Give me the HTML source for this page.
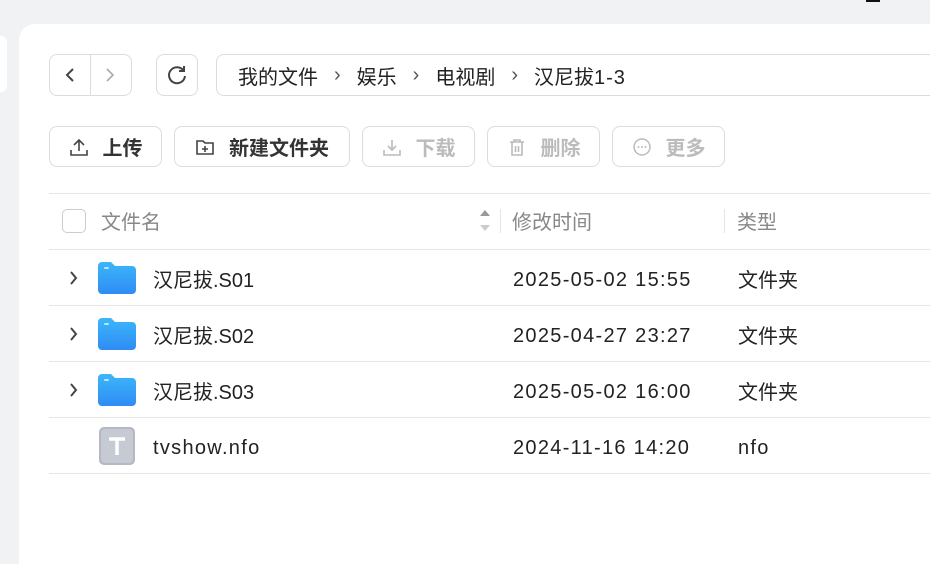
<!DOCTYPE html>
<html><head><meta charset="utf-8"><style>
*{margin:0;padding:0;box-sizing:border-box}
body{width:930px;height:549px;background:#f1f2f4;position:relative;overflow:hidden;font-family:"Liberation Sans","Noto Sans CJK SC",sans-serif;color:#222}
.abs{position:absolute}
.card{left:19px;top:24px;width:930px;height:540px;background:#fff;border-top-left-radius:16px}
.side{left:-10px;top:36px;width:17px;height:56px;background:#fff;border-radius:6px}
.box{border:1px solid #dcdcdc;border-radius:8px;background:#fff}
.btn{top:126px;height:41px;display:flex;align-items:center;justify-content:center;gap:14px;font-size:20px;font-weight:bold;color:#333}
.btn.dis{color:#bbb}
.line{left:49px;width:900px;height:1px;background:#e5e5e5}
.row{left:49px;width:900px;height:56px;font-size:20px;color:#222}
.row span{position:absolute;top:20px;line-height:24px;white-space:nowrap}
.row span.l{top:19px;letter-spacing:1.3px}
.fold{position:absolute;left:49px;top:13px;width:38px;height:32px}
.bc{display:flex;align-items:center;padding-left:21px;gap:16px;font-size:20px}
</style></head><body>
<div class="abs side"></div>
<div class="abs card"></div>
<div class="abs box" style="left:49px;top:54px;width:83px;height:42px"></div>
<div class="abs" style="left:90px;top:55px;width:1px;height:40px;background:#dcdcdc"></div>
<svg class="abs" style="left:62px;top:66px" width="16" height="18"><path d="M11 3L5 9l6 6" fill="none" stroke="#444" stroke-width="2"/></svg>
<svg class="abs" style="left:102px;top:66px" width="16" height="18"><path d="M5 3l6 6-6 6" fill="none" stroke="#aaa" stroke-width="1.6"/></svg>
<div class="abs box" style="left:156px;top:54px;width:42px;height:42px"></div>
<svg class="abs" style="left:165px;top:63px" width="24" height="24"><path d="M18.5 7.5A8 8 0 1 0 20 13" fill="none" stroke="#444" stroke-width="2"/><path d="M19 3v5h-5" fill="none" stroke="#444" stroke-width="2"/></svg>
<div class="abs box bc" style="left:216px;top:54px;width:730px;height:42px;color:#222">
<span>我的文件</span><span style="color:#555">›</span><span>娱乐</span><span style="color:#555">›</span><span>电视剧</span><span style="color:#555">›</span><span>汉尼拔<span style="letter-spacing:1px">1-3</span></span></div>

<div class="abs box btn" style="left:49px;width:113px"><svg width="20" height="20"><path d="M10 14V3M5 8l5-5 5 5M2 13v5h16v-5" fill="none" stroke="#444" stroke-width="1.6"/></svg>上传</div>
<div class="abs box btn" style="left:174px;width:176px"><svg width="20" height="20"><path d="M2 4h6l2 2h8v11H2z M10 9v6M7 12h6" fill="none" stroke="#444" stroke-width="1.6"/></svg>新建文件夹</div>
<div class="abs box btn dis" style="left:362px;width:113px"><svg width="20" height="20"><path d="M10 3v10M6 9l4 4 4-4M2 13v5h16v-5" fill="none" stroke="#bbb" stroke-width="1.6"/></svg>下载</div>
<div class="abs box btn dis" style="left:487px;width:113px"><svg width="20" height="20"><path d="M3 5h14M7 5V3h6v2M5 5v13h10V5M8.5 9v6M11.5 9v6" fill="none" stroke="#bbb" stroke-width="1.6"/></svg>删除</div>
<div class="abs box btn dis" style="left:612px;width:113px"><svg width="20" height="20"><circle cx="10" cy="10" r="8" fill="none" stroke="#bbb" stroke-width="1.5"/><circle cx="6.5" cy="10" r="1" fill="#bbb"/><circle cx="10" cy="10" r="1" fill="#bbb"/><circle cx="13.5" cy="10" r="1" fill="#bbb"/></svg>更多</div>

<div class="abs line" style="top:193px"></div>
<div class="abs" style="left:62px;top:209px;width:24px;height:24px;border:1.5px solid #ccc;border-radius:5px"></div>
<div class="abs" style="left:101px;top:206px;font-size:20px;color:#888">文件名</div>
<svg class="abs" style="left:479px;top:208px" width="12" height="26"><path d="M1 8l5-6 5 6z" fill="#999"/><path d="M1 17l5 6 5-6z" fill="#ccc"/></svg>
<div class="abs" style="left:500px;top:209px;width:1px;height:24px;background:#e5e5e5"></div>
<div class="abs" style="left:512px;top:206px;font-size:20px;color:#888">修改时间</div>
<div class="abs" style="left:724px;top:209px;width:1px;height:24px;background:#e5e5e5"></div>
<div class="abs" style="left:737px;top:206px;font-size:20px;color:#888">类型</div>
<div class="abs line" style="top:249px"></div>

<div class="abs row" style="top:249px"><svg class="abs" style="left:19px;top:21px" width="12" height="16"><path d="M3 2l5 6-5 6" fill="none" stroke="#444" stroke-width="2"/></svg><svg class="fold" viewBox="0 0 38 32"><defs><linearGradient id="g" x1="0" y1="0" x2="0" y2="1"><stop offset="0" stop-color="#3cb6fb"/><stop offset="1" stop-color="#2f8cf4"/></linearGradient></defs><path d="M0 4a4 4 0 0 1 4-4h9l4 4h17a4 4 0 0 1 4 4v20a4 4 0 0 1-4 4H4a4 4 0 0 1-4-4z" fill="url(#g)"/><rect x="6" y="5" width="5" height="2" rx="1" fill="#bfe6ff"/></svg><span style="left:104px">汉尼拔.S01</span><span class="l" style="left:464px">2025-05-02 15:55</span><span style="left:689px">文件夹</span></div>
<div class="abs line" style="top:305px"></div>
<div class="abs row" style="top:305px"><svg class="abs" style="left:19px;top:21px" width="12" height="16"><path d="M3 2l5 6-5 6" fill="none" stroke="#444" stroke-width="2"/></svg><svg class="fold" viewBox="0 0 38 32"><path d="M0 4a4 4 0 0 1 4-4h9l4 4h17a4 4 0 0 1 4 4v20a4 4 0 0 1-4 4H4a4 4 0 0 1-4-4z" fill="url(#g)"/><rect x="6" y="5" width="5" height="2" rx="1" fill="#bfe6ff"/></svg><span style="left:104px">汉尼拔.S02</span><span class="l" style="left:464px">2025-04-27 23:27</span><span style="left:689px">文件夹</span></div>
<div class="abs line" style="top:361px"></div>
<div class="abs row" style="top:361px"><svg class="abs" style="left:19px;top:21px" width="12" height="16"><path d="M3 2l5 6-5 6" fill="none" stroke="#444" stroke-width="2"/></svg><svg class="fold" viewBox="0 0 38 32"><path d="M0 4a4 4 0 0 1 4-4h9l4 4h17a4 4 0 0 1 4 4v20a4 4 0 0 1-4 4H4a4 4 0 0 1-4-4z" fill="url(#g)"/><rect x="6" y="5" width="5" height="2" rx="1" fill="#bfe6ff"/></svg><span style="left:104px">汉尼拔.S03</span><span class="l" style="left:464px">2025-05-02 16:00</span><span style="left:689px">文件夹</span></div>
<div class="abs line" style="top:417px"></div>
<div class="abs row" style="top:417px"><svg class="abs" style="left:50px;top:10px" width="36" height="38"><rect x="0" y="0" width="36" height="38" rx="5" fill="#b3b8c2"/><rect x="2" y="2" width="32" height="34" rx="4" fill="#c6cad2"/><path d="M10 12h16M18 12v16" stroke="#fff" stroke-width="3.5"/></svg><span class="l" style="left:104px">tvshow.nfo</span><span class="l" style="left:464px">2024-11-16 14:20</span><span class="l" style="left:689px">nfo</span></div>
<div class="abs line" style="top:473px"></div>
<div class="abs" style="left:866px;top:0;width:14px;height:2px;background:#111"></div>
</body></html>
